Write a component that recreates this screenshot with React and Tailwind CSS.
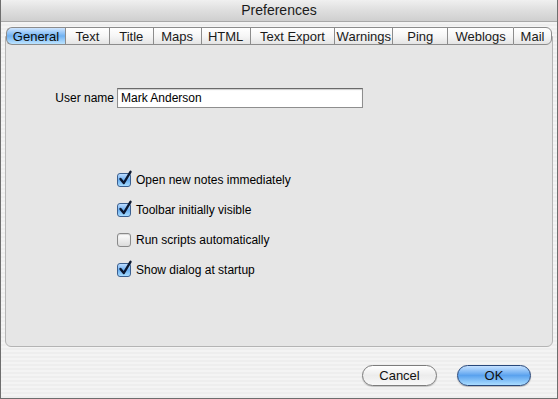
import React from 'react';

const tabs = [
  { label: 'General', w: 59 },
  { label: 'Text', w: 44 },
  { label: 'Title', w: 44 },
  { label: 'Maps', w: 48 },
  { label: 'HTML', w: 49 },
  { label: 'Text Export', w: 85 },
  { label: 'Warnings', w: 58 },
  { label: 'Ping', w: 55 },
  { label: 'Weblogs', w: 66 },
  { label: 'Mail', w: 39 },
];

const options = [
  { label: 'Open new notes immediately', checked: true },
  { label: 'Toolbar initially visible', checked: true },
  { label: 'Run scripts automatically', checked: false },
  { label: 'Show dialog at startup', checked: true },
];

function Checkbox({ checked }) {
  if (!checked) {
    return (
      <span className="w-[14px] h-[14px] rounded-[3px] border border-[#8a8a8a] bg-gradient-to-b from-[#ffffff] to-[#dcdcdc] shadow-[inset_0_1px_1px_rgba(0,0,0,0.15)]" />
    );
  }
  return (
    <span className="relative w-[14px] h-[14px] rounded-[3px] border border-[#3b5f8f] bg-gradient-to-b from-[#bcdcff] via-[#6aaef0] to-[#a6dcff]">
      <svg className="absolute -top-[4px] left-[0px]" width="15" height="16" viewBox="0 0 15 16">
        <path d="M2.5 9 L5.8 13 L12.5 1.8" fill="none" stroke="#0c1830" strokeWidth="2.4" strokeLinecap="round" strokeLinejoin="round" />
      </svg>
    </span>
  );
}

export default function App() {
  return (
    <div
      className="w-[558px] h-[399px] flex flex-col bg-[repeating-linear-gradient(to_bottom,#eeeeee_0px,#eeeeee_2px,#f4f4f4_2px,#f4f4f4_4px)] border-x border-b border-[#6e6e6e] overflow-hidden text-[#111]"
      style={{ fontFamily: '"Liberation Sans", Arial, sans-serif' }}
    >
      {/* title bar */}
      <div className="h-[22px] shrink-0 flex items-center justify-center bg-gradient-to-b from-[#f0f0f0] via-[#dedede] to-[#cfcfcf] border-b border-[#a8a8a8] text-[14px] text-[#1a1a1a]">
        Preferences
      </div>

      {/* tabs + panel */}
      <div className="px-[4px] pt-[5px]">
        <div className="relative z-10 flex h-[18px] mx-[1px] -mb-[9px]">
          {tabs.map((t, i) => {
            const active = i === 0;
            return (
              <div
                key={t.label}
                style={{ width: t.w }}
                className={
                  'flex items-center justify-center text-[13px] leading-none border-y border-[#8c8c8c] ' +
                  (i === 0 ? 'rounded-l-[6px] border-l ' : 'border-l ') +
                  (i === tabs.length - 1 ? 'rounded-r-[6px] border-r ' : '') +
                  (active
                    ? 'bg-gradient-to-b from-[#cfe6ff] via-[#6fb1f2] to-[#bde4ff] border-[#4a6d9c] text-[#0a0a0a]'
                    : 'bg-gradient-to-b from-[#ffffff] via-[#f6f6f6] to-[#e4e4e4] text-[#1a1a1a]')
                }
              >
                {t.label}
              </div>
            );
          })}
        </div>
        <div className="h-[311px] bg-[#e6e6e6] border border-[#b4b4b4] rounded-b-[6px] pt-[51px]">
          <div className="flex items-center">
            <span className="w-[111px] text-right text-[12px] pr-[3px] text-black">User name</span>
            <div className="w-[246px] h-[20px] bg-white border border-[#8e8e8e] border-t-[#6a6a6a] shadow-[inset_0_1px_1px_rgba(0,0,0,0.2)] flex items-center pl-[3px] text-[12px] text-black">
              Mark Anderson
            </div>
          </div>
          <div className="mt-[65px] pl-[111px] flex flex-col gap-[16px]">
            {options.map((o) => (
              <div key={o.label} className="flex items-center gap-[5px] h-[14px] text-[12px] text-black">
                <Checkbox checked={o.checked} />
                <span>{o.label}</span>
              </div>
            ))}
          </div>
        </div>
      </div>

      {/* buttons */}
      <div className="flex justify-end gap-[20px] pr-[26px] pt-[18px]">
        <button className="w-[75px] h-[21px] rounded-full border border-[#7c7c7c] bg-gradient-to-b from-[#ffffff] via-[#ececec] to-[#f8f8f8] shadow-[0_1px_1px_rgba(0,0,0,0.2)] text-[13px] text-[#111] leading-none">
          Cancel
        </button>
        <button className="w-[74px] h-[21px] rounded-full border border-[#28477a] bg-gradient-to-b from-[#c4e1ff] via-[#5aa2ee] to-[#a9dcff] shadow-[0_1px_1px_rgba(0,0,0,0.25)] text-[13px] text-[#111] leading-none">
          OK
        </button>
      </div>
    </div>
  );
}
